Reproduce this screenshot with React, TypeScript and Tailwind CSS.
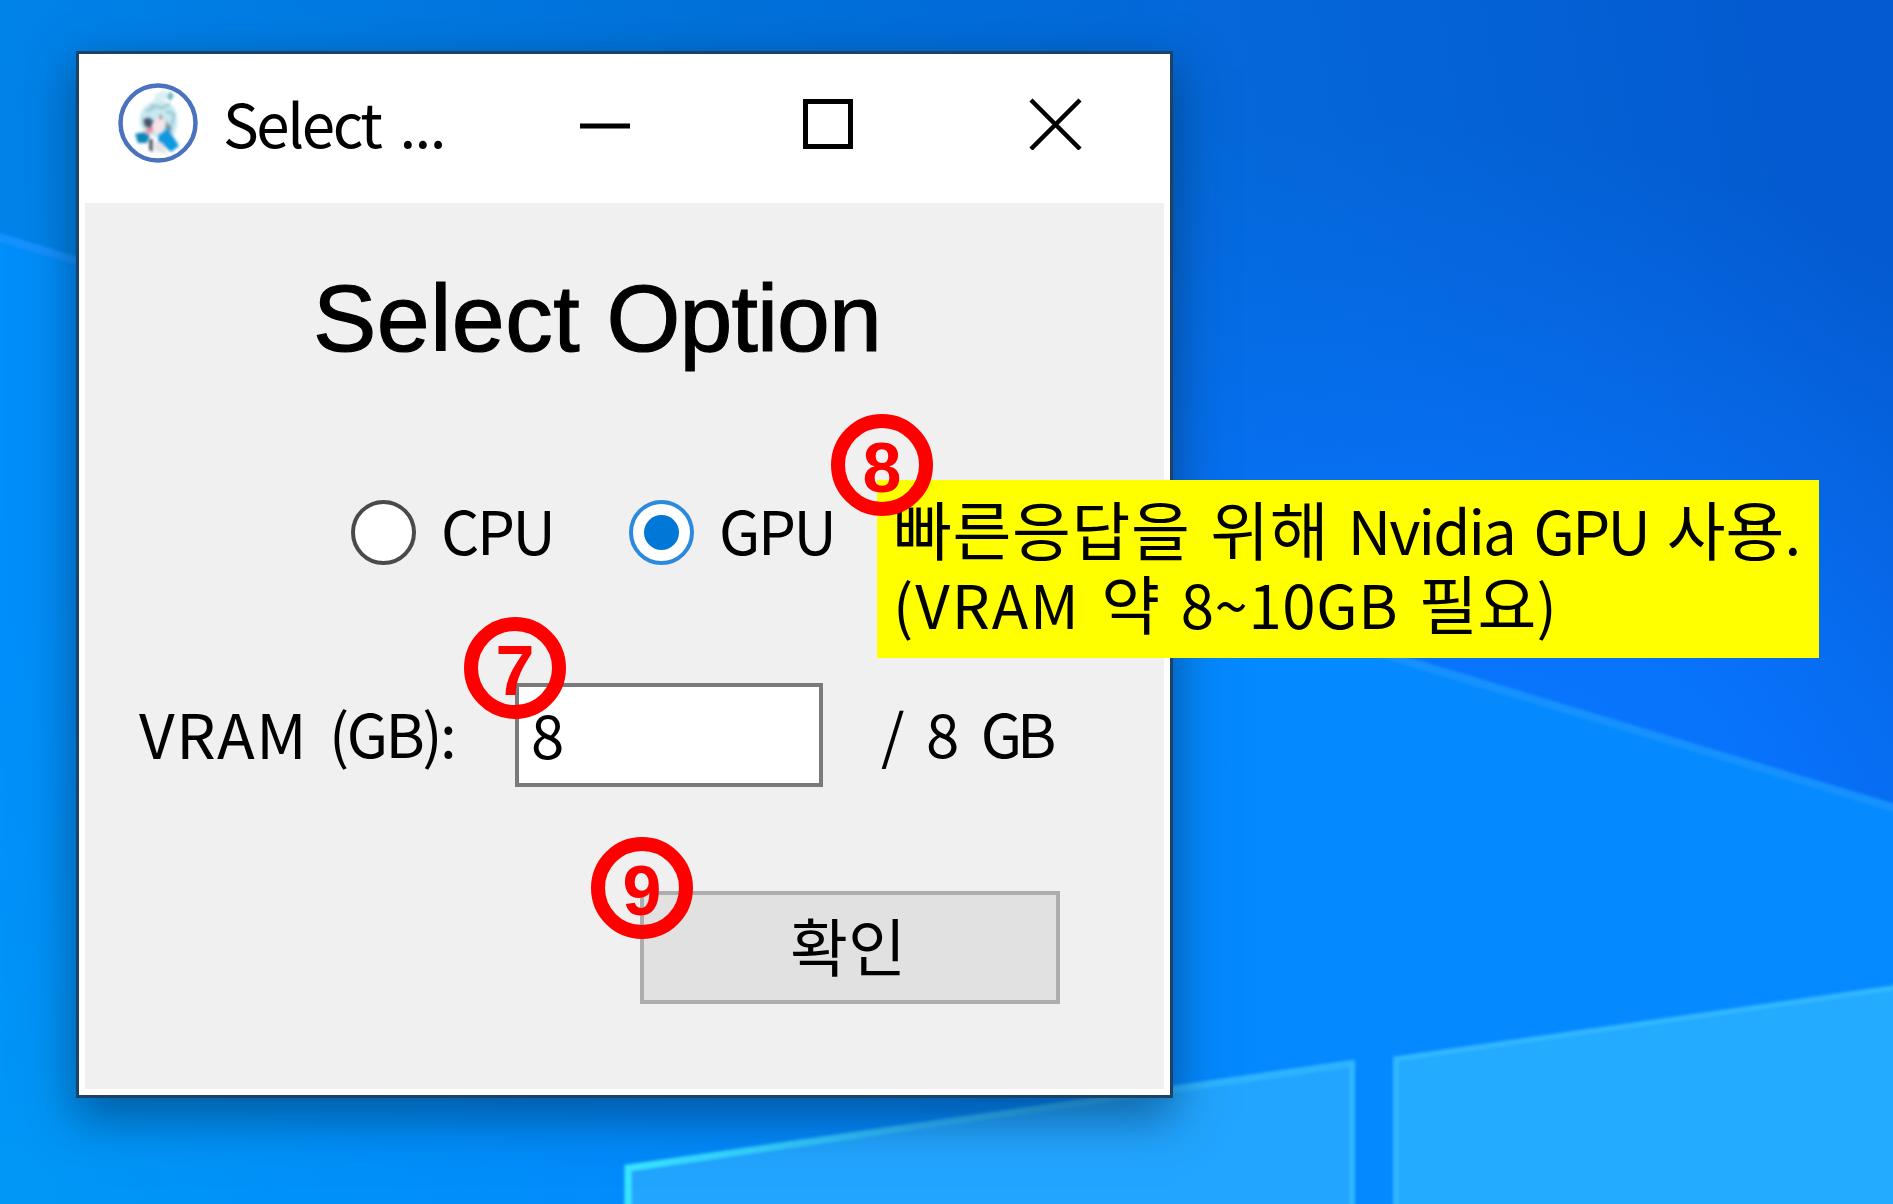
import React from "react";

const korean = "font-['Noto_Sans_CJK_KR','Noto_Sans',sans-serif]";

function Wallpaper() {
  return (
    <svg className="absolute inset-0 h-full w-full" viewBox="0 0 1893 1204" preserveAspectRatio="none" aria-hidden="true">
      <defs>
        <linearGradient id="sky" gradientUnits="userSpaceOnUse" x1="0" y1="300" x2="1800" y2="0">
          <stop offset="0" stopColor="#0084ea" />
          <stop offset=".4" stopColor="#0072da" />
          <stop offset=".68" stopColor="#0468da" />
          <stop offset="1" stopColor="#045ad0" />
        </linearGradient>
        <radialGradient id="glow" gradientUnits="userSpaceOnUse" cx="0" cy="0" r="1" gradientTransform="translate(1500 840) rotate(17) scale(900 700)">
          <stop offset="0" stopColor="#0a7aff" />
          <stop offset=".35" stopColor="#0874ff" stopOpacity=".9" />
          <stop offset="1" stopColor="#0872f5" stopOpacity="0" />
        </radialGradient>
        <linearGradient id="beam" x1="0" y1="0" x2="1" y2="0">
          <stop offset="0" stopColor="#008efa" />
          <stop offset=".55" stopColor="#0488fd" />
          <stop offset="1" stopColor="#058bff" />
        </linearGradient>
        <radialGradient id="corner" gradientUnits="userSpaceOnUse" cx="0" cy="1204" r="700">
          <stop offset="0" stopColor="#0098f6" />
          <stop offset="1" stopColor="#0090fa" stopOpacity="0" />
        </radialGradient>
        <linearGradient id="edge" x1="0" y1="0" x2="1" y2="0">
          <stop offset="0" stopColor="#38e6ff" />
          <stop offset=".4" stopColor="#2fb8ff" />
          <stop offset="1" stopColor="#2db2ff" />
        </linearGradient>
        <filter id="soft"><feGaussianBlur stdDeviation="1.8" /></filter>
      </defs>
      <rect width="1893" height="1204" fill="url(#sky)" />
      <rect width="1893" height="1204" fill="url(#glow)" />
      <path d="M0 234 1893 808V1204H0Z" fill="url(#beam)" />
      <rect y="500" width="700" height="704" fill="url(#corner)" />
      <path d="M-5 236 1898 809" stroke="#1492ff" strokeWidth="8" filter="url(#soft)" />
      <g filter="url(#soft)">
        <path d="M625 1167 1355 1061V1210H625Z" fill="#22a5ff" />
        <path d="M1393 1057 1900 985V1210H1393Z" fill="#24abff" />
        <path d="M628 1210V1168L1355 1063" fill="none" stroke="url(#edge)" strokeWidth="7" />
        <path d="M1352 1063V1210M1396 1210V1059L1900 987" fill="none" stroke="#33b8ff" strokeWidth="5" />
      </g>
    </svg>
  );
}

function AppIcon() {
  return (
    <svg className="h-20 w-20 shrink-0" viewBox="0 0 80 80" aria-hidden="true">
      <defs><filter id="tiny"><feGaussianBlur stdDeviation="1.5" /></filter></defs>
      <circle cx="40" cy="40" r="37.5" fill="#fff" stroke="#4a72bd" strokeWidth="4.5" />
      <g filter="url(#tiny)">
        <path d="M22 42C20 27 29 18 42 18C55 18 61 29 59 43L56 52 45 56 27 50Z" fill="#c6e8f0" />
        <path d="M38 11 47 7 52 12 46 18 34 21Z" fill="#daf0f3" />
        <path d="M52 8 56 13 52 18 49 14Z" fill="#68b8bd" />
        <path d="M33 22 44 25 52 21M48 28 56 31 54 42M28 28 36 25" fill="none" stroke="#9ac4cf" strokeWidth="2.500" />
        <path d="M25 36 31 34 36 38 33 46 26 43Z" fill="#47566f" />
        <path d="M35 40 42 33 48 40 42 50 33 49Z" fill="#f9e4e8" />
        <path d="M28 45H36L34 50H28Z" fill="#f08ea4" />
        <path d="M41 31 45 34 42 38Z" fill="#b5787c" />
        <path d="M48 38 54 44 52 54 47 48Z" fill="#82959f" />
        <path d="M17 51 26 49 32 52 29 60 20 60Z" fill="#0d86b8" />
        <path d="M40 52 50 45 61 63 53 69 40 58Z" fill="#0f9ae0" />
        <path d="M31 56 35 56 35 69 31 67Z" fill="#59646e" />
        <path d="M36 58 45 61 49 71 37 68Z" fill="#e5e4e7" />
      </g>
    </svg>
  );
}

function Badge({ n, className }: { n: number; className: string }) {
  return (
    <div className={`absolute z-20 flex h-[102px] w-[102px] justify-center rounded-full border-[14px] border-[#ff0000] ${className}`}>
      <span className="mt-[8px] h-[64px] font-['Liberation_Sans',sans-serif] text-[70px] leading-[64px] font-bold text-[#ff0000]">{n}</span>
    </div>
  );
}

function Radio({ label, checked = false }: { label: string; checked?: boolean }) {
  return (
    <div className="flex h-[70px] items-center" role="radio" aria-checked={checked}>
      <span className={`flex h-[65px] w-[65px] items-center justify-center rounded-full border-4 bg-white ${checked ? "border-[#2b8ade]" : "border-[#4a4a4a]"}`}>
        {checked && <span className="h-[35px] w-[35px] rounded-full bg-[#0078d7]" />}
      </span>
      <span className="mb-[7px] ml-[25px] w-[116px] text-[60px] leading-[70px] tracking-[-2.4px] whitespace-nowrap">{label}</span>
    </div>
  );
}

export default function App() {
  return (
    <main className={`relative h-[1204px] w-[1893px] overflow-hidden text-black ${korean}`}>
      <Wallpaper />

      <section className="absolute top-[51px] left-[76px] flex h-[1047px] w-[1097px] flex-col border-[3px] border-[#1c4266] bg-white shadow-[0_18px_46px_2px_rgba(0,35,70,0.5)]">
        <header className="flex h-[149px] shrink-0 items-start">
          <div className="mt-[29px] ml-[39px]"><AppIcon /></div>
          <span className="mt-[33px] ml-[25px] w-[261px] text-[60px] leading-[70px] tracking-[-2.4px] whitespace-nowrap [word-spacing:8px]">Select <span className="tracking-[-1.6px]">...</span></span>
          <svg className="mt-[44px] ml-[95px] h-[52px] w-[503px] shrink-0" viewBox="0 0 503 52" fill="none" stroke="#000" strokeWidth="5" aria-hidden="true">
            <path d="M1 28H51" />
            <path d="M226.500 3.500H271.500V48.500H226.500Z" />
            <path d="M452 2 501 51M501 2 452 51" strokeWidth="4.500" />
          </svg>
        </header>

        <div className="mx-[6px] mb-[6px] flex-1 bg-[#f0f0f0]">
          <h1 className="ml-[228px] pt-[60px] font-['Liberation_Sans',sans-serif] text-[95px] leading-[110px] font-normal whitespace-nowrap [-webkit-text-stroke:1.2px_black]"><span className="tracking-[0.5px]">Select</span> <span className="tracking-[-0.9px]">Option</span></h1>

          <div className="mt-[124px] ml-[266px] flex gap-[72px]">
            <Radio label="CPU" />
            <Radio label="GPU" checked />
          </div>

          <div className="mt-[115px] ml-[54px] flex h-[105px] items-center text-[60px] leading-[70px] whitespace-nowrap">
            <span className="mb-[6px] w-[190px] text-[62px] tracking-[1.6px]">VRAM</span>
            <span className="mb-[6px] w-[186px] tracking-[-2.6px]">(GB):</span>
            <div className="h-[104px] w-[308px] border-4 border-[#7a7a7a] bg-white pt-[11px] pl-[12px]">8</div>
            <span className="mb-[6px] ml-[58px] [word-spacing:8px]">/ 8 <span className="tracking-[-5px]">GB</span></span>
          </div>

          <button className="mt-[104px] ml-[555px] flex h-[113px] w-[420px] items-center justify-center border-[4px] border-[#adadad] bg-[#e1e1e1] pr-[4px] pb-[8px] text-[63px] leading-[70px]">확인</button>
        </div>
      </section>

      <aside className="absolute top-[480px] left-[877px] z-10 h-[178px] w-[942px] bg-[#ffff00] pt-[10px] pl-[16px] text-[60px] leading-[74px] whitespace-nowrap">
        <p className="h-[74px] [word-spacing:5px]">
          <span className="text-[64px] tracking-[0.6px]">빠른응답을 위해</span> <span className="tracking-[-1.9px]">Nvidia</span> <span className="tracking-[-2.6px]">GPU</span> <span className="text-[64px]">사용</span>.
        </p>
        <p className="h-[74px] [word-spacing:7px]">
          <span className="tracking-[2px]">(VRAM</span> <span className="text-[64px]">약</span> <span className="tracking-[0.6px]">8~10GB</span> <span className="text-[64px]">필요</span>)
        </p>
      </aside>

      <Badge n={7} className="top-[617px] left-[464px]" />
      <Badge n={8} className="top-[414px] left-[831px]" />
      <Badge n={9} className="top-[837px] left-[591px]" />
    </main>
  );
}
